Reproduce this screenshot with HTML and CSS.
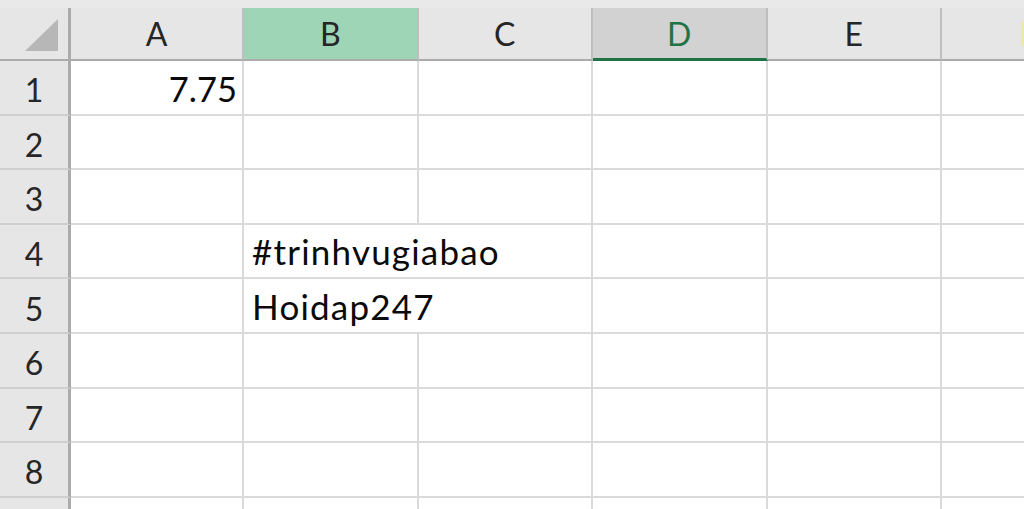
FILE: index.html
```html
<!DOCTYPE html>
<html lang="en">
<head>
    <meta charset="UTF-8">
    <title>Sheet1</title>
    <link rel="stylesheet" href="styles.css">
</head>
<body>
<div class="strip"></div>
<div class="sheet">
    <div class="corner">
        <svg width="33" height="32" viewBox="0 0 33 32"><polygon points="0,32 33,32 33,0" fill="#b7b7b7"/></svg>
    </div>
    <div class="col">A</div>
    <div class="col picked">B</div>
    <div class="col">C</div>
    <div class="col active">D</div>
    <div class="col">E</div>
    <div class="col last">F</div>

    <div class="row">1</div>
    <div class="cell num">7.75</div>
    <div class="cell"></div><div class="cell"></div><div class="cell"></div><div class="cell"></div><div class="cell"></div>

    <div class="row">2</div>
    <div class="cell"></div><div class="cell"></div><div class="cell"></div><div class="cell"></div><div class="cell"></div><div class="cell"></div>

    <div class="row">3</div>
    <div class="cell"></div><div class="cell"></div><div class="cell"></div><div class="cell"></div><div class="cell"></div><div class="cell"></div>

    <div class="row">4</div>
    <div class="cell"></div>
    <div class="cell spill">#trinhvugiabao</div>
    <div class="cell"></div><div class="cell"></div><div class="cell"></div>

    <div class="row">5</div>
    <div class="cell"></div>
    <div class="cell spill">Hoidap247</div>
    <div class="cell"></div><div class="cell"></div><div class="cell"></div>

    <div class="row">6</div>
    <div class="cell"></div><div class="cell"></div><div class="cell"></div><div class="cell"></div><div class="cell"></div><div class="cell"></div>

    <div class="row">7</div>
    <div class="cell"></div><div class="cell"></div><div class="cell"></div><div class="cell"></div><div class="cell"></div><div class="cell"></div>

    <div class="row">8</div>
    <div class="cell"></div><div class="cell"></div><div class="cell"></div><div class="cell"></div><div class="cell"></div><div class="cell"></div>

    <div class="row"></div>
    <div class="cell"></div><div class="cell"></div><div class="cell"></div><div class="cell"></div><div class="cell"></div><div class="cell"></div>
</div>
</body>
</html>
```

FILE: styles.css
```css
body{
    margin: 0;
    background-color: #e9e9e9;
    overflow: hidden;
    font-family: Lato, "Liberation Sans", sans-serif;
}
.strip{
    height: 8px;
}
.sheet{
    display: grid;
    grid-template-columns: 71px 173px repeat(4, 174.5px) 1fr;
    grid-template-rows: 53px repeat(9, 54.6px);
}
.sheet > div{
    box-sizing: border-box;
}
.corner{
    display: flex;
    justify-content: flex-end;
    align-items: flex-end;
    padding: 0 10px 8px 0;
    background-color: #e6e6e6;
    border-right: 3px solid #ababab;
    border-bottom: 2px solid #ababab;
}
.col{
    display: flex;
    justify-content: center;
    align-items: center;
    background-color: #e6e6e6;
    border-right: 2px solid #bfbfbf;
    border-bottom: 2px solid #ababab;
    color: #262626;
    font-size: 32px;
}
.col.picked{
    background-color: #9fd5b7;
}
.col.active{
    background-color: #d2d2d2;
    color: #217346;
    border-bottom: 3px solid #217346;
}
.col.last{
    justify-content: flex-start;
    padding-left: 77px;
    color: #ecec9c;
}
.row{
    display: flex;
    justify-content: center;
    align-items: center;
    padding-top: 5px;
    background-color: #e6e6e6;
    border-right: 3px solid #ababab;
    border-bottom: 2px solid #cfcfcf;
    color: #262626;
    font-size: 32px;
}
.cell{
    display: flex;
    align-items: flex-end;
    background-color: #ffffff;
    border-right: 2px solid #dadada;
    border-bottom: 2px solid #dadada;
    padding: 0 5px 5px 8px;
    font-size: 34.5px;
    color: #0a0a0a;
    white-space: nowrap;
}
.num{
    justify-content: flex-end;
}
.spill{
    grid-column: span 2;
    font-size: 35px;
    letter-spacing: 1.2px;
}
```
